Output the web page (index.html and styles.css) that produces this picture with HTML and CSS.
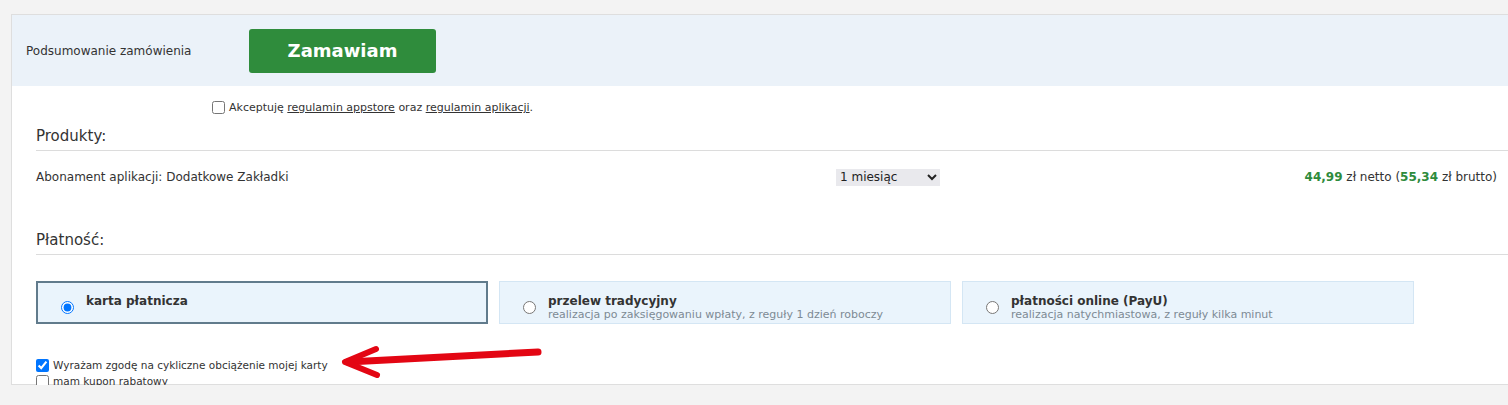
FILE: index.html
```html
<!DOCTYPE html>
<html lang="pl">
<head>
  <meta charset="UTF-8" />
  <title>Podsumowanie zamówienia</title>
  <link rel="stylesheet" href="styles.css">
</head>
<body>
  <div class="panel">
    <div class="head">
      <span class="head-label">Podsumowanie zamówienia</span>
      <button class="btn-order">Zamawiam</button>
    </div>

    <div class="content">
      <label class="terms">
        <input type="checkbox" />
        <span>Akceptuję <a href="#">regulamin appstore</a> oraz <a href="#">regulamin aplikacji</a>.</span>
      </label>

      <h3 class="section">Produkty:</h3>
      <div class="product">
        <span class="product-name">Abonament aplikacji: Dodatkowe Zakładki</span>
        <select class="period">
          <option>1 miesiąc</option>
          <option>12 miesięcy</option>
        </select>
        <span class="price"><b>44,99</b> zł netto (<b>55,34</b> zł brutto)</span>
      </div>

      <h3 class="section">Płatność:</h3>
      <div class="methods">
        <label class="method active">
          <input type="radio" name="pay" checked />
          <span class="method-text"><strong>karta płatnicza</strong></span>
        </label>
        <label class="method">
          <input type="radio" name="pay" />
          <span class="method-text"><strong>przelew tradycyjny</strong><small>realizacja po zaksięgowaniu wpłaty, z reguły 1 dzień roboczy</small></span>
        </label>
        <label class="method">
          <input type="radio" name="pay" />
          <span class="method-text"><strong>płatności online (PayU)</strong><small>realizacja natychmiastowa, z reguły kilka minut</small></span>
        </label>
      </div>

      <div class="options">
        <label class="opt"><input type="checkbox" checked /> <span>Wyrażam zgodę na cykliczne obciążenie mojej karty</span></label>
        <label class="opt"><input type="checkbox" /> <span>mam kupon rabatowy</span></label>
      </div>
    </div>

    <svg class="arrow" width="210" height="36" viewBox="0 0 210 36">
      <path d="M199 7 L9 17" fill="none" stroke="#e30613" stroke-width="7" stroke-linecap="round"/>
      <path d="M37 4 L6 17 L38 30" fill="none" stroke="#e30613" stroke-width="6" stroke-linecap="round" stroke-linejoin="round"/>
    </svg>
  </div>
</body>
</html>
```

FILE: styles.css
```css
* { box-sizing: border-box; }
body { margin: 0; background: #f3f3f3; font-family: "DejaVu Sans", Verdana, sans-serif; font-size: 12px; color: #333; overflow: hidden; }
.panel { position: relative; margin: 14px 0 0 11px; width: 1510px; height: 371px; background: #fff; border: 1px solid #dedede; }
.head { display: flex; align-items: center; height: 71px; padding-left: 14px; background: #ebf2f9; }
.head-label { width: 223px; font-size: 12px; color: #333; }
.btn-order { width: 187px; height: 44px; border: 0; border-radius: 3px; background: #2f8c3c; color: #fff; font-family: inherit; font-size: 18px; font-weight: bold; cursor: pointer; }
.content { padding: 15px 0 0 24px; }
.terms { display: flex; align-items: center; gap: 4px; margin-left: 176px; font-size: 11px; }
.terms input { margin: 0; }
.terms a { color: #333; }
.section { margin: 13px 0 0; padding-bottom: 5px; border-bottom: 1px solid #dcdcdc; font-size: 15px; font-weight: normal; }
.product { display: flex; align-items: center; height: 67px; padding-bottom: 15px; }
.product-name { width: 800px; }
.period { width: 104px; height: 17px; border: 0; background: #e9e9ed; font-family: inherit; font-size: 12px; color: #222; }
.price { margin-left: auto; margin-right: 23px; }
.price b { color: #2e8b3c; }
.methods { display: flex; gap: 11px; margin-top: 26px; }
.method { display: flex; align-items: flex-start; width: 452px; height: 43px; padding: 12px 0 0 22px; background: #eaf4fc; border: 1px solid #d4e6f4; cursor: pointer; }
.method.active { border: 2px solid #617b8c; padding: 11px 0 0 22px; }
.method input { margin: 7px 12px 0 1px; }
.method-text { display: flex; flex-direction: column; }
.method-text strong { font-size: 12px; }
.method-text small { font-size: 11px; color: #7d8a94; }
.options { margin-top: 33px; }
.opt { display: flex; align-items: center; gap: 4px; font-size: 10.5px; line-height: 16px; }
.opt input { margin: 0; }
.arrow { position: absolute; left: 327px; top: 330px; }
```
